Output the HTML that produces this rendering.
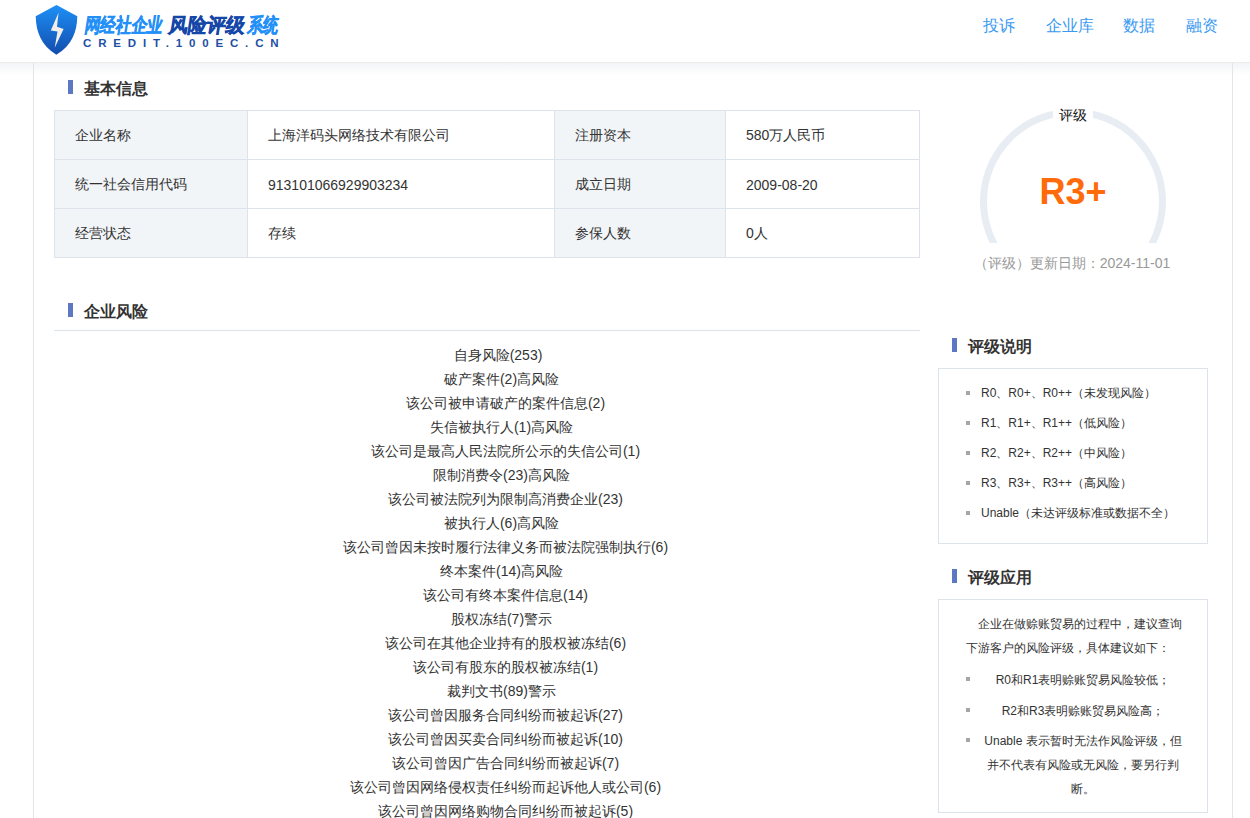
<!DOCTYPE html>
<html><head><meta charset="utf-8">
<style>
*{box-sizing:border-box;margin:0;padding:0}
html,body{width:1250px;height:818px;overflow:hidden;background:#fff;font-family:"Liberation Sans",sans-serif;color:#333}
.abs{position:absolute}
#hdr{position:absolute;left:0;top:0;width:1250px;height:63px;background:#fff;border-bottom:1px solid #ebebeb;z-index:3}
#shadow{position:absolute;left:0;top:63px;width:1250px;height:12px;background:linear-gradient(#f2f4f8,#fff);z-index:1}
.vline{position:absolute;top:63px;width:1px;height:760px;background:#e3e5e8;z-index:2}
.logo{position:absolute;font-size:20px;line-height:24px;font-weight:bold;-webkit-text-stroke:0.5px currentColor;white-space:nowrap;transform-origin:0 100%}
.nav{position:absolute;top:15px;font-size:16px;line-height:22px;color:#3a9af2}
.sec{position:absolute;height:20px}
.sec .bar{position:absolute;left:0;top:1px;width:5px;height:14px;background:#5c77c3}
.sec .t{position:absolute;left:16px;top:0px;font-size:16px;font-weight:bold;line-height:20px;color:#333;white-space:nowrap}
table.info{position:absolute;left:54px;top:110px;border-collapse:collapse;font-size:14px}
table.info td{border:1px solid #dde3ea;height:49px;padding:2px 0 0 20px;vertical-align:middle;white-space:nowrap}
table.info td.l{background:#f2f5f8}
.risk{position:absolute;left:54px;top:343px;width:866px;font-size:14px;line-height:24px;color:#333}
.risk div{text-align:center;white-space:nowrap;padding-left:37px}
.risk div.c{padding-left:29px}
.risk div.z{padding-left:22px}
.box{position:absolute;left:938px;width:270px;border:1px solid #dde3ea}
.box ul{list-style:none}
.box li{position:relative;font-size:13px;white-space:nowrap}
.box li:before{content:"";position:absolute;width:4px;height:4px;background:#999}
.b1{position:absolute;left:42px;top:14px}
.b1 li{height:30px;line-height:20px;padding-top:0}
.b1 li:before{left:-15px;top:8px}
.p2{position:absolute;left:27px;top:12px;width:220px;font-size:13px;line-height:24px;white-space:normal}
.b2{position:absolute;left:27px;top:68px;width:220px}
.b2 li{line-height:24px;white-space:normal;text-align:center;margin-bottom:6px}
.b2 li:before{left:0;top:10px}
.bl{position:absolute;left:966px;width:4px;height:4px;background:#a6a6a6}
.bt{position:absolute;left:981px;font-size:12px;line-height:20px;white-space:nowrap;color:#333}
.ap{position:absolute;left:983px;width:200px;font-size:12px;line-height:24px;white-space:nowrap;text-align:center;color:#333}
</style></head>
<body>
<div id="hdr">
  <svg class="abs" style="left:30px;top:0" width="60" height="60" viewBox="0 0 60 60">
    <defs><linearGradient id="sg" x1="0" y1="0" x2="0" y2="1"><stop offset="0" stop-color="#1e90f6"/><stop offset="1" stop-color="#124cad"/></linearGradient></defs>
    <path d="M26.5 5 L47.3 16.2 C47 32 42 45 26.4 54.8 C11 45 6 32 5.7 16.2 Z" fill="url(#sg)"/>
    <path d="M28.6 12.6 L20.8 30.6 L27.5 31.6 L24.7 47.8 L33.6 29.1 L27 26.8 Z" fill="#f2ede9"/>
  </svg>
  <div class="logo" style="left:83px;top:13px;transform:skewX(-9deg) scaleX(0.78);color:#2390f8">网经社企业</div>
  <div class="logo" style="left:166.5px;top:13px;transform:skewX(-9deg) scaleX(0.95);color:#1547a8">风险评级</div>
  <div class="logo" style="left:246px;top:13px;transform:skewX(-9deg) scaleX(0.77);color:#2390f8">系统</div>
  <div class="abs" style="left:83px;top:36px;font-size:11.5px;line-height:14px;font-weight:bold;letter-spacing:6.85px;color:#1d4fa5;white-space:nowrap">CREDIT.100EC.CN</div>
  <div class="nav" style="left:983px">投诉</div>
  <div class="nav" style="left:1046px">企业库</div>
  <div class="nav" style="left:1123px">数据</div>
  <div class="nav" style="left:1186px">融资</div>
</div>
<div id="shadow"></div>
<div class="vline" style="left:33px"></div>
<div class="vline" style="left:1232px"></div>

<div class="sec" style="left:68px;top:79px"><div class="bar"></div><div class="t">基本信息</div></div>
<table class="info">
<tr><td class="l" style="width:193px">企业名称</td><td style="width:307px">上海洋码头网络技术有限公司</td><td class="l" style="width:171px">注册资本</td><td style="width:194px">580万人民币</td></tr>
<tr><td class="l">统一社会信用代码</td><td>913101066929903234</td><td class="l">成立日期</td><td>2009-08-20</td></tr>
<tr><td class="l">经营状态</td><td>存续</td><td class="l">参保人数</td><td>0人</td></tr>
</table>

<div class="sec" style="left:68px;top:302px"><div class="bar"></div><div class="t">企业风险</div></div>
<div class="abs" style="left:54px;top:330px;width:866px;height:1px;background:#dde3ea"></div>
<div class="risk">
<div class="z">自身风险(253)</div>
<div class="c">破产案件(2)高风险</div>
<div>该公司被申请破产的案件信息(2)</div>
<div class="c">失信被执行人(1)高风险</div>
<div>该公司是最高人民法院所公示的失信公司(1)</div>
<div class="c">限制消费令(23)高风险</div>
<div>该公司被法院列为限制高消费企业(23)</div>
<div class="c">被执行人(6)高风险</div>
<div>该公司曾因未按时履行法律义务而被法院强制执行(6)</div>
<div class="c">终本案件(14)高风险</div>
<div>该公司有终本案件信息(14)</div>
<div class="c">股权冻结(7)警示</div>
<div>该公司在其他企业持有的股权被冻结(6)</div>
<div>该公司有股东的股权被冻结(1)</div>
<div class="c">裁判文书(89)警示</div>
<div>该公司曾因服务合同纠纷而被起诉(27)</div>
<div>该公司曾因买卖合同纠纷而被起诉(10)</div>
<div>该公司曾因广告合同纠纷而被起诉(7)</div>
<div>该公司曾因网络侵权责任纠纷而起诉他人或公司(6)</div>
<div>该公司曾因网络购物合同纠纷而被起诉(5)</div>
</div>

<!-- gauge -->
<svg class="abs" style="left:973px;top:104px" width="200" height="139" viewBox="0 0 200 139">
  <circle cx="100" cy="97.5" r="89.5" fill="none" stroke="#e8edf4" stroke-width="7"/>
</svg>
<div class="abs" style="left:1053px;top:104px;width:40px;height:20px;background:#fff;text-align:center;font-size:14px;line-height:22px;color:#111">评级</div>
<div class="abs" style="left:973px;top:172px;width:200px;text-align:center;font-size:36px;line-height:40px;font-weight:bold;color:#ff6a0a">R3+</div>
<div class="abs" style="left:939px;top:253px;width:266px;text-align:center;font-size:14px;line-height:20px;color:#999">（评级）更新日期：2024-11-01</div>

<div class="sec" style="left:952px;top:337px"><div class="bar"></div><div class="t">评级说明</div></div>
<div class="box" style="top:368px;height:176px"></div>
<div class="bl" style="top:391px"></div><div class="bt" style="top:383px">R0、R0+、R0++（未发现风险）</div>
<div class="bl" style="top:421px"></div><div class="bt" style="top:413px">R1、R1+、R1++（低风险）</div>
<div class="bl" style="top:451px"></div><div class="bt" style="top:443px">R2、R2+、R2++（中风险）</div>
<div class="bl" style="top:481px"></div><div class="bt" style="top:473px">R3、R3+、R3++（高风险）</div>
<div class="bl" style="top:511px"></div><div class="bt" style="top:503px">Unable（未达评级标准或数据不全）</div>

<div class="sec" style="left:952px;top:568px"><div class="bar"></div><div class="t">评级应用</div></div>
<div class="box" style="top:599px;height:214px"></div>
<div class="ap" style="top:612px;left:966px;width:220px;text-align:left;text-indent:12px">企业在做赊账贸易的过程中，建议查询<br>下游客户的风险评级，具体建议如下：</div>
<div class="bl" style="top:677px"></div><div class="ap" style="top:668px">R0和R1表明赊账贸易风险较低；</div>
<div class="bl" style="top:708px"></div><div class="ap" style="top:699px">R2和R3表明赊账贸易风险高；</div>
<div class="bl" style="top:738px"></div><div class="ap" style="top:729px">Unable 表示暂时无法作风险评级，但<br>并不代表有风险或无风险，要另行判<br>断。</div>
</body></html>
